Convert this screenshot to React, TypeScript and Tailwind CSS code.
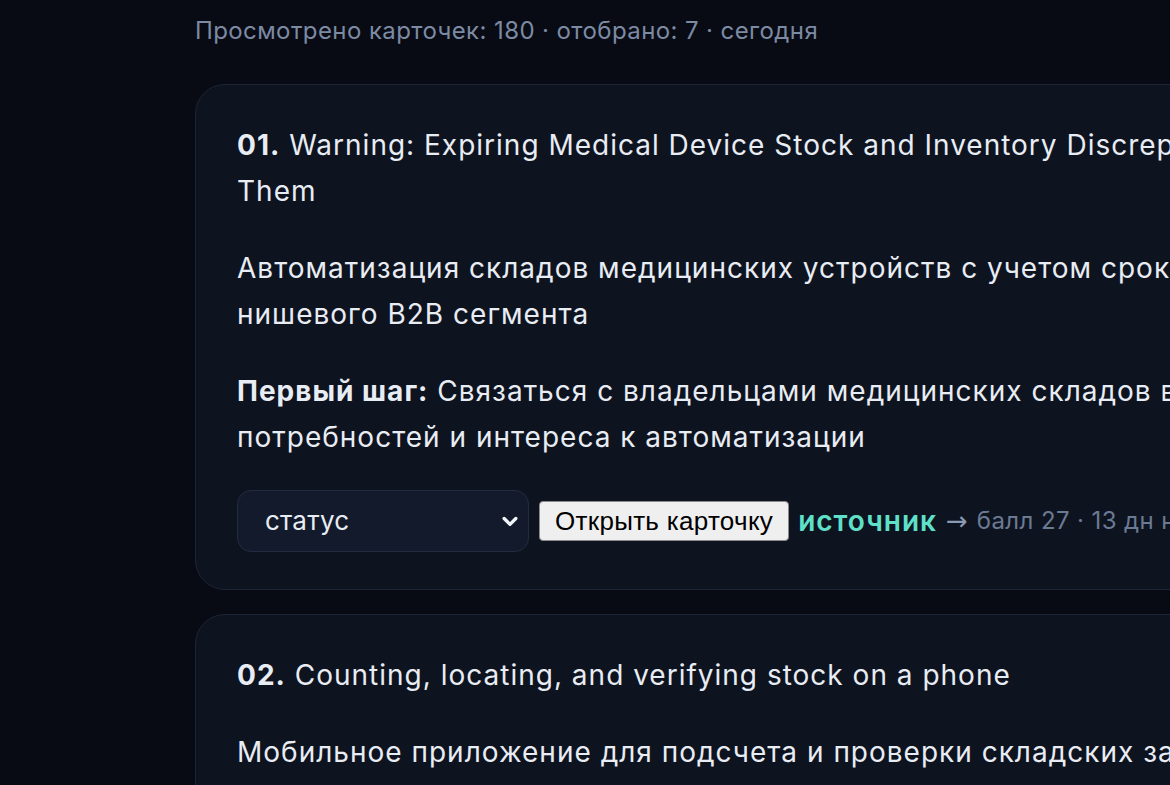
import React from 'react';

type Idea = {
  n: string;
  title: string;
  summary: string;
  step?: string;
  score: number;
  age: string;
};

const ideas: Idea[] = [
  {
    n: '01',
    title: 'Warning: Expiring Medical Device Stock and Inventory Discrepancies: How to Prevent Them',
    summary: 'Автоматизация складов медицинских устройств с учетом сроков годности и серий для нишевого B2B сегмента',
    step: 'Связаться с владельцами медицинских складов в регионе для выяснения потребностей и интереса к автоматизации',
    score: 27,
    age: '13 дн назад',
  },
  {
    n: '02',
    title: 'Counting, locating, and verifying stock on a phone',
    summary: 'Мобильное приложение для подсчета и проверки складских запасов для малого бизнеса',
    step: 'Опросить владельцев небольших магазинов о том, как они сейчас ведут учет остатков',
    score: 24,
    age: '9 дн назад',
  },
];

const IdeaCard = ({ idea }: { idea: Idea }) => (
  <div className="w-[1394px] shrink-0 rounded-[30px] border border-[#1c2536] bg-[#0e1320] px-[41px] pt-[37px] pb-[37px] text-[28px] leading-[46px] tracking-[1px] text-[#e8ecf3]">
    <div>
      <span className="font-bold">{idea.n}.</span> {idea.title}
    </div>
    <div className="mt-[31px]">{idea.summary}</div>
    {idea.step && (
      <div className="mt-[31px]">
        <span className="font-bold">Первый шаг:</span> {idea.step}
      </div>
    )}
    <div className="mt-[30px] flex items-center">
      <div className="relative">
        <select className="h-[62px] w-[292px] appearance-none rounded-[14px] border border-[#222c40] bg-[#131a2b] pl-[27px] text-[26px] tracking-[0.2px] text-[#e8ecf3] outline-none">
          <option>статус</option>
          <option>в работе</option>
          <option>отложено</option>
        </select>
        <svg
          className="pointer-events-none absolute right-[9px] top-1/2 -translate-y-1/2"
          width="20"
          height="20"
          viewBox="0 0 24 24"
          fill="none"
          stroke="#f1f4f9"
          strokeWidth="4"
          strokeLinecap="round"
          strokeLinejoin="round"
        >
          <path d="M5 9l7 7 7-7" />
        </svg>
      </div>
      <button className="ml-[10px] h-[40px] rounded-[4px] border border-[#8a8a8a] bg-[#efefef] px-[15px] font-['Liberation_Sans',Arial,sans-serif] text-[26px] leading-none tracking-[0.3px] text-black">
        Открыть карточку
      </button>
      <span className="ml-[9px] flex items-center whitespace-nowrap">
        <span className="text-[28px] font-semibold tracking-[1px] text-[#5fe0c8]">источник</span>
        <span className="ml-[9px] font-['DejaVu_Sans',sans-serif] text-[26px] tracking-normal text-[#8a9ab3]">→</span>
        <span className="ml-[9px] text-[24px] tracking-[0.4px] text-[#6b7a93]">
          балл {idea.score} · {idea.age}
        </span>
      </span>
    </div>
  </div>
);

export default function App() {
  return (
    <div className="h-[785px] w-[1170px] overflow-hidden bg-[#080b13] font-['Inter','Noto_Sans',sans-serif]">
      <div className="pl-[195px] pt-[16px]">
        <div className="text-[24px] leading-[30px] tracking-[0.4px] text-[#7c8aa3]">
          Просмотрено карточек: 180 · отобрано: 7 · сегодня
        </div>
        <div className="mt-[38px] flex flex-col gap-[24px]">
          {ideas.map((idea) => (
            <IdeaCard key={idea.n} idea={idea} />
          ))}
        </div>
      </div>
    </div>
  );
}
